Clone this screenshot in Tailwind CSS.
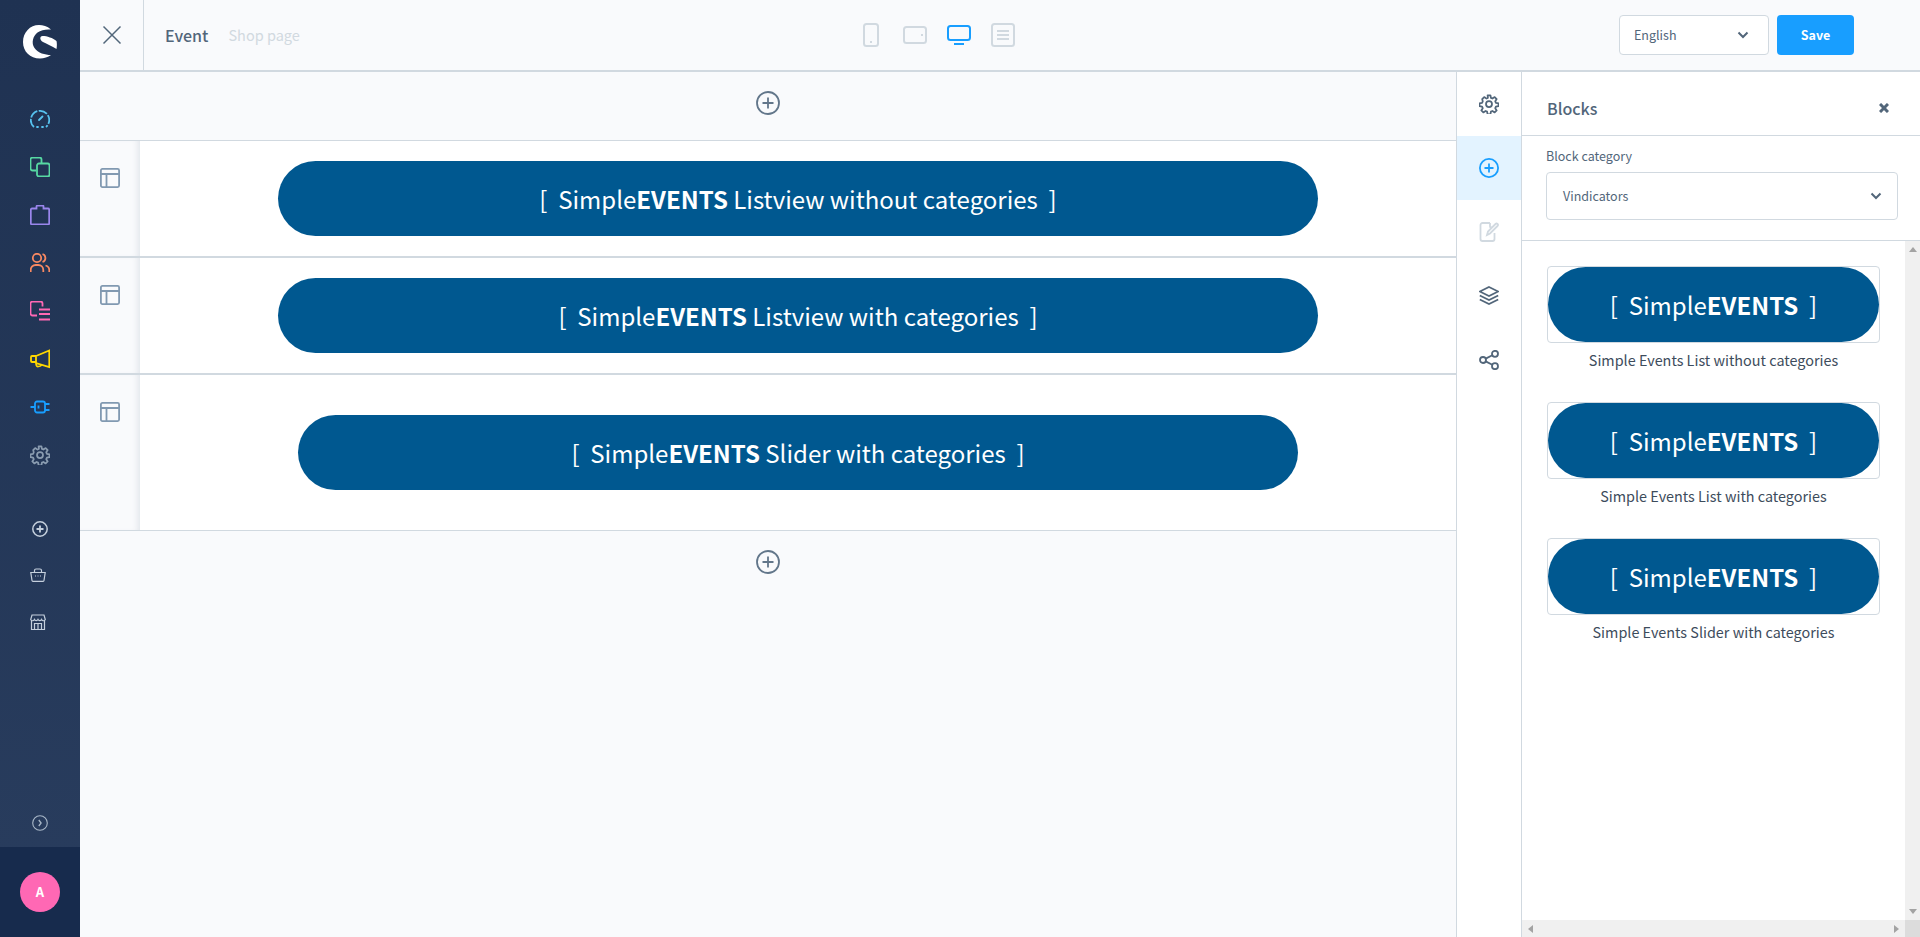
<!DOCTYPE html>
<html lang="en">
<head>
  <meta charset="UTF-8" />
  <title>Event</title>
  <script src="https://cdn.jsdelivr.net/npm/@tailwindcss/browser@4"></script>
</head>
<body class="h-[937px] w-[1920px] overflow-hidden flex bg-[#f9fafc] text-[#52667a] font-['Noto_Sans_CJK_SC','Source_Sans_Pro',sans-serif]">

  <!-- Main navigation -->
  <aside class="w-[80px] h-full shrink-0 flex flex-col bg-gradient-to-b from-[#1f3252] to-[#293d5e]">
    <div class="h-[95px] flex justify-center pt-[25px]">
      <svg width="34" height="34" viewBox="0 0 34 34" fill="#fff"><path d="M28 4.500C24 1 20 0 16 0C7 0 0 7.500 0 17C0 26.500 7 33.500 17 33.500C21 33.500 25 32 28 30C22 30 15 28 11.500 23C8 18 10 11 14.500 7.500C18 5 23 4 28 4.500Z"/><path d="M19.500 11C24 11 30 13 33.500 16C34 18 34 21 33.500 24C29 21 24 19 20 17C16.500 15 16.500 11.500 19.500 11Z"/></svg>
    </div>
    <nav class="flex flex-col items-center">
      <div class="h-[48px] flex items-center justify-center">
        <svg width="20" height="20" viewBox="0 0 20 20" fill="none" stroke="#57c3f0" stroke-width="1.800"><path d="M4 18 A9.200 9.200 0 1 1 16 18" stroke-dasharray="9 1.500"/><path d="M7 18h1M12 18h1M9 11l3.500-3.500" stroke-linecap="round"/></svg>
      </div>
      <div class="h-[48px] flex items-center justify-center">
        <svg width="20" height="20" viewBox="0 0 20 20" fill="none" stroke="#57d9a3" stroke-width="1.800"><path d="M6 13.500H2.500a2 2 0 0 1-2-2v-9a2 2 0 0 1 2-2h7a2 2 0 0 1 2 2V6"/><rect x="7" y="6.500" width="12.500" height="13" rx="2"/></svg>
      </div>
      <div class="h-[48px] flex items-center justify-center">
        <svg width="20" height="20" viewBox="0 0 20 20" fill="none" stroke="#9a86ec" stroke-width="1.800"><path d="M2 3.500h4.500V1.500a1 1 0 0 1 1-1h5a1 1 0 0 1 1 1v2H18a1.200 1.200 0 0 1 1.200 1.200v13.600a1.200 1.200 0 0 1-1.200 1.200H2a1.200 1.200 0 0 1-1.200-1.200V4.700A1.200 1.200 0 0 1 2 3.500z"/></svg>
      </div>
      <div class="h-[48px] flex items-center justify-center">
        <svg width="20" height="20" viewBox="0 0 20 20" fill="none" stroke="#f88962" stroke-width="1.800"><circle cx="7" cy="5" r="4.200"/><path d="M.7 19v-2a5 5 0 0 1 5-5h2.600a5 5 0 0 1 5 5v2M12.500 1a4.200 4.200 0 0 1 0 8M15.500 12.500a5 5 0 0 1 3.800 4.500v2"/></svg>
      </div>
      <div class="h-[48px] flex items-center justify-center">
        <svg width="20" height="20" viewBox="0 0 20 20" fill="none" stroke="#ff68b4" stroke-width="1.800"><path d="M7 14.500H2.500a2 2 0 0 1-2-2v-10a2 2 0 0 1 2-2h8a2 2 0 0 1 2 2v3"/><path d="M9 8.500h11M9 13h11M9 18.500h11"/></svg>
      </div>
      <div class="h-[48px] flex items-center justify-center">
        <svg width="20" height="20" viewBox="0 0 20 20" fill="none" stroke="#ffd700" stroke-width="1.800"><path d="M19.300 1.500v16.500L6 14V7z"/><path d="M6 7H2a1 1 0 0 0-1 1v4a1 1 0 0 0 1 1h4M6 14.500l.5 2a1.500 1.500 0 0 0 1.800 1l2-.5a1.500 1.500 0 0 0 1-1.300"/></svg>
      </div>
      <div class="h-[48px] flex items-center justify-center">
        <svg width="20" height="20" viewBox="0 0 20 20" fill="none" stroke="#189eff" stroke-width="1.800"><rect x="5" y="4.500" width="10" height="11" rx="2"/><path d="M.5 10H5M15 7h4.500M15 13h4.500M8.500 8.500v3"/></svg>
      </div>
      <div class="h-[48px] flex items-center justify-center">
        <svg width="20" height="20" viewBox="0 0 24 24" fill="none" stroke="#8a9cb0" stroke-width="2.100"><circle cx="12" cy="12" r="3.600"/><path d="M10.300 1.500h3.400l.6 3.100 1.800.8 2.700-1.700 2.400 2.400-1.700 2.700.8 1.800 3.100.6v3.400l-3.100.6-.8 1.800 1.700 2.700-2.400 2.400-2.700-1.700-1.800.8-.6 3.100h-3.400l-.6-3.100-1.800-.8-2.700 1.700-2.400-2.400 1.700-2.700-.8-1.800-3.100-.6v-3.400l3.100-.6.8-1.800L3.800 6.100l2.400-2.400 2.700 1.700 1.800-.8z" stroke-linejoin="round"/></svg>
      </div>
    </nav>
    <div class="flex flex-col items-center mt-[27px]">
      <div class="h-[46px] flex items-center justify-center">
        <svg width="16" height="16" viewBox="0 0 16 16" fill="none" stroke="#c5d0dd" stroke-width="1.500"><circle cx="8" cy="8" r="7.200"/><path d="M8 4.500v7M4.500 8h7" stroke-width="1.800"/></svg>
      </div>
      <div class="h-[46px] flex items-center justify-center pr-[4px]">
        <svg width="16" height="14" viewBox="0 0 16 14" fill="none" stroke="#c5d0dd" stroke-width="1.200"><path d="M.8 4.500h14.400l-1.200 8a1 1 0 0 1-1 .9H3a1 1 0 0 1-1-.9zM4.500 4.500v-2a1.500 1.500 0 0 1 1.500-1.500h4a1.500 1.500 0 0 1 1.500 1.500v2M5 8h1M7.500 8h1M10 8h1"/></svg>
      </div>
      <div class="h-[46px] flex items-center justify-center pr-[4px] pt-[2px]">
        <svg width="16" height="16" viewBox="0 0 16 16" fill="none" stroke="#c5d0dd" stroke-width="1.200"><path d="M2 1h12l1.300 4.500a2 2 0 0 1-3.700 0 2 2 0 0 1-3.600 0 2 2 0 0 1-3.600 0 2 2 0 0 1-3.700 0zM1.500 6.500v9h13v-9M4.500 15.500v-6h7v6M8 9.500v6"/></svg>
      </div>
    </div>
    <div class="mt-auto h-[48px] flex items-center justify-center">
      <svg width="16" height="16" viewBox="0 0 16 16" fill="none" stroke="#a9b8c8" stroke-width="1.100"><circle cx="8" cy="8" r="7.300"/><path d="M6.800 5l2.300 3-2.300 3" stroke-width="1.300"/></svg>
    </div>
    <div class="h-[90px] bg-[#172b4d] flex items-center justify-center">
      <div class="w-[40px] h-[40px] rounded-full bg-[#ff68b4] text-white text-[13px] font-bold flex items-center justify-center">A</div>
    </div>
  </aside>

  <div class="flex-1 flex flex-col min-w-0">
    <!-- Top bar -->
    <header class="h-[72px] shrink-0 flex items-stretch border-b-2 border-[#d1d9e0] bg-[#f9fafc]">
      <div class="w-[64px] border-r border-[#d1d9e0] flex items-center justify-center">
        <svg width="20" height="20" viewBox="0 0 20 20" fill="none" stroke="#52667a" stroke-width="1.500"><path d="M1.500 1.500l17 17M18.500 1.500l-17 17"/></svg>
      </div>
      <div class="w-[715px] pl-[21px] flex items-center gap-[20px]">
        <span class="text-[16px] font-medium">Event</span>
        <span class="text-[14.5px] text-[#d1d9e0]">Shop page</span>
      </div>
      <div class="flex items-center gap-[20px] w-[160px]">
        <div class="w-[24px] flex justify-center">
          <svg width="16" height="24" viewBox="0 0 16 24" fill="none" stroke="#d1d9e0" stroke-width="2"><rect x="1" y="1" width="14" height="22" rx="2.500"/><rect x="7" y="18" width="2" height="2" fill="#d1d9e0" stroke="none"/></svg>
        </div>
        <svg width="24" height="18" viewBox="0 0 24 18" fill="none" stroke="#d1d9e0" stroke-width="2"><rect x="1" y="1" width="22" height="16" rx="2.500"/><rect x="18" y="8" width="2" height="2" fill="#d1d9e0" stroke="none"/></svg>
        <svg width="24" height="20" viewBox="0 0 24 20" fill="none" stroke="#189eff" stroke-width="2"><rect x="1" y="1" width="22" height="14" rx="2.500"/><path d="M7 19h10"/></svg>
        <svg width="24" height="24" viewBox="0 0 24 24" fill="none" stroke="#d1d9e0" stroke-width="2"><rect x="1" y="1" width="22" height="22" rx="2.500"/><path d="M6 8h12M6 12h12M6 16h12"/></svg>
      </div>
      <div class="flex-1 flex items-center justify-end pr-[66px] gap-[8px]">
        <div class="w-[150px] h-[40px] bg-white border border-[#d1d9e0] rounded-[4px] flex items-center justify-between pl-[14px] pr-[19px] text-[12.5px]">
          <span>English</span>
          <svg width="12" height="8" viewBox="0 0 12 8" fill="none" stroke="#52667a" stroke-width="2"><path d="M1.500 1.500L6 6l4.500-4.500"/></svg>
        </div>
        <button class="w-[77px] h-[40px] bg-[#189eff] text-white text-[12.5px] font-bold rounded-[4px]">Save</button>
      </div>
    </header>

    <div class="flex-1 flex min-h-0">
      <!-- Canvas -->
      <main class="w-[1376px] shrink-0 flex flex-col">
        <div class="h-[69px] border-b border-[#d1d9e0] flex items-center justify-center pr-[1px] pb-[7px]">
          <svg width="24" height="24" viewBox="0 0 24 24" fill="none" stroke="#62768a" stroke-width="1.800"><circle cx="12" cy="12" r="11"/><path d="M12 6.500v11M6.500 12h11"/></svg>
        </div>

        <section class="h-[117px] flex border-b-2 border-[#d1d9e0]">
          <div class="w-[60px] shrink-0 flex justify-center pt-[27px] bg-[#f9fafc] shadow-[inset_-6px_0_6px_-4px_#e0e4ea]">
            <svg width="20" height="20" viewBox="0 0 20 20" fill="none" stroke="#8199b1" stroke-width="1.800"><rect x=".9" y=".9" width="18.200" height="18.200" rx="1.500"/><path d="M.9 6h18.200M6.500 6v13.100"/></svg>
          </div>
          <div class="flex-1 bg-white flex justify-center pt-[20px]">
            <div class="w-[1040px] h-[75px] rounded-[38px] bg-[#005890] text-white text-[24px] leading-[75px] text-center">[&nbsp; Simple<b>EVENTS</b> Listview without categories &nbsp;]</div>
          </div>
        </section>

        <section class="h-[117px] flex border-b-2 border-[#d1d9e0]">
          <div class="w-[60px] shrink-0 flex justify-center pt-[27px] bg-[#f9fafc] shadow-[inset_-6px_0_6px_-4px_#e0e4ea]">
            <svg width="20" height="20" viewBox="0 0 20 20" fill="none" stroke="#8199b1" stroke-width="1.800"><rect x=".9" y=".9" width="18.200" height="18.200" rx="1.500"/><path d="M.9 6h18.200M6.500 6v13.100"/></svg>
          </div>
          <div class="flex-1 bg-white flex justify-center pt-[20px]">
            <div class="w-[1040px] h-[75px] rounded-[38px] bg-[#005890] text-white text-[24px] leading-[75px] text-center">[&nbsp; Simple<b>EVENTS</b> Listview with categories &nbsp;]</div>
          </div>
        </section>

        <section class="h-[156px] flex border-b border-[#d1d9e0]">
          <div class="w-[60px] shrink-0 flex justify-center pt-[27px] bg-[#f9fafc] shadow-[inset_-6px_0_6px_-4px_#e0e4ea]">
            <svg width="20" height="20" viewBox="0 0 20 20" fill="none" stroke="#8199b1" stroke-width="1.800"><rect x=".9" y=".9" width="18.200" height="18.200" rx="1.500"/><path d="M.9 6h18.200M6.500 6v13.100"/></svg>
          </div>
          <div class="flex-1 bg-white flex justify-center pt-[40px]">
            <div class="w-[1000px] h-[75px] rounded-[38px] bg-[#005890] text-white text-[24px] leading-[75px] text-center">[&nbsp; Simple<b>EVENTS</b> Slider with categories &nbsp;]</div>
          </div>
        </section>

        <div class="h-[61px] flex items-center justify-center pr-[1px]">
          <svg width="24" height="24" viewBox="0 0 24 24" fill="none" stroke="#62768a" stroke-width="1.800"><circle cx="12" cy="12" r="11"/><path d="M12 6.500v11M6.500 12h11"/></svg>
        </div>
      </main>

      <!-- Sidebar tabs -->
      <div class="w-[66px] shrink-0 bg-white border-x border-[#d1d9e0] flex flex-col">
        <div class="h-[64px] flex items-center justify-center">
          <svg width="20" height="20" viewBox="0 0 24 24" fill="none" stroke="#52667a" stroke-width="2.100"><circle cx="12" cy="12" r="3.600"/><path d="M10.300 1.500h3.400l.6 3.100 1.800.8 2.700-1.700 2.400 2.400-1.700 2.700.8 1.800 3.100.6v3.400l-3.100.6-.8 1.800 1.700 2.700-2.400 2.400-2.700-1.700-1.800.8-.6 3.100h-3.400l-.6-3.100-1.800-.8-2.700 1.700-2.400-2.400 1.700-2.700-.8-1.800-3.100-.6v-3.400l3.100-.6.8-1.800L3.800 6.100l2.400-2.400 2.700 1.700 1.800-.8z" stroke-linejoin="round"/></svg>
        </div>
        <div class="h-[64px] bg-[#e3f3ff] flex items-center justify-center">
          <svg width="20" height="20" viewBox="0 0 20 20" fill="none" stroke="#189eff" stroke-width="1.800"><circle cx="10" cy="10" r="9.100"/><path d="M10 5.500v9M5.500 10h9"/></svg>
        </div>
        <div class="h-[64px] flex items-center justify-center">
          <svg width="20" height="20" viewBox="0 0 20 20" fill="none" stroke="#d1d9e0" stroke-width="1.800"><path d="M11 1H3.500A2 2 0 0 0 1.500 3v14a2 2 0 0 0 2 2h10a2 2 0 0 0 2-2v-6"/><path d="M11 1v3.500a1 1 0 0 0 1 1h1"/><path d="M8 13l1-3.500L16.500 2a1.200 1.200 0 0 1 2 2L11 11.500z"/></svg>
        </div>
        <div class="h-[64px] flex items-center justify-center">
          <svg width="20" height="20" viewBox="0 0 20 20" fill="none" stroke="#52667a" stroke-width="1.800"><path d="M10 1l9.200 4.500L10 10 .8 5.500z"/><path d="M.8 9.500L10 14l9.200-4.500M.8 13.500L10 18l9.200-4.500"/></svg>
        </div>
        <div class="h-[64px] flex items-center justify-center">
          <svg width="20" height="20" viewBox="0 0 20 20" fill="none" stroke="#52667a" stroke-width="1.800"><circle cx="16" cy="3.800" r="3"/><circle cx="4" cy="10" r="3"/><circle cx="16" cy="16.200" r="3"/><path d="M6.700 8.600l6.600-3.400M6.700 11.400l6.600 3.400"/></svg>
        </div>
      </div>

      <!-- Blocks panel -->
      <div class="flex-1 min-w-0 bg-white flex flex-col">
        <div class="h-[64px] shrink-0 border-b border-[#d1d9e0] flex items-center justify-between pl-[25px] pr-[31px] pt-[9px]">
          <span class="text-[16px] font-medium">Blocks</span>
          <svg width="10" height="10" viewBox="0 0 10 10" fill="none" stroke="#52667a" stroke-width="3"><path d="M1 1l8 8M9 1l-8 8"/></svg>
        </div>
        <div class="h-[105px] shrink-0 border-b border-[#d1d9e0] pl-[24px] pr-[22px] pt-[10px]">
          <div class="text-[12.5px] leading-[20px] mb-[6px]">Block category</div>
          <div class="h-[48px] border border-[#d1d9e0] rounded-[4px] flex items-center justify-between pl-[16px] pr-[15px] text-[12.5px]">
            <span>Vindicators</span>
            <svg width="12" height="8" viewBox="0 0 12 8" fill="none" stroke="#52667a" stroke-width="2"><path d="M1.500 1.500L6 6l4.500-4.500"/></svg>
          </div>
        </div>
        <div class="flex-1 flex flex-col min-h-0">
          <div class="flex-1 flex min-h-0">
            <div class="flex-1 pl-[25px] pr-[25px] pt-[25px] flex flex-col gap-[25px] text-[#3d4c5c]">
              <div>
                <div class="h-[77px] border border-[#d1d9e0] rounded-[4px] bg-white"><div class="h-[75px] rounded-[38px] bg-[#005890] text-white text-[24px] leading-[75px] text-center">[&nbsp; Simple<b>EVENTS</b> &nbsp;]</div></div>
                <div class="h-[34px] text-[14.4px] leading-[34px] text-center">Simple Events List without categories</div>
              </div>
              <div>
                <div class="h-[77px] border border-[#d1d9e0] rounded-[4px] bg-white"><div class="h-[75px] rounded-[38px] bg-[#005890] text-white text-[24px] leading-[75px] text-center">[&nbsp; Simple<b>EVENTS</b> &nbsp;]</div></div>
                <div class="h-[34px] text-[14.4px] leading-[34px] text-center">Simple Events List with categories</div>
              </div>
              <div>
                <div class="h-[77px] border border-[#d1d9e0] rounded-[4px] bg-white"><div class="h-[75px] rounded-[38px] bg-[#005890] text-white text-[24px] leading-[75px] text-center">[&nbsp; Simple<b>EVENTS</b> &nbsp;]</div></div>
                <div class="h-[34px] text-[14.4px] leading-[34px] text-center">Simple Events Slider with categories</div>
              </div>
            </div>
            <!-- Vertical scrollbar -->
            <div class="w-[15px] shrink-0 bg-[#f0f0f0] flex flex-col items-center justify-between py-[6px]">
              <svg width="8" height="5" viewBox="0 0 8 5" fill="#a3a3a3"><path d="M4 0l4 5H0z"/></svg>
              <svg width="8" height="5" viewBox="0 0 8 5" fill="#a3a3a3"><path d="M0 0h8L4 5z"/></svg>
            </div>
          </div>
          <!-- Horizontal scrollbar -->
          <div class="h-[17px] shrink-0 bg-[#f0f0f0] flex">
            <div class="flex-1 flex items-center justify-between px-[6px]">
              <svg width="5" height="8" viewBox="0 0 5 8" fill="#a3a3a3"><path d="M5 0v8L0 4z"/></svg>
              <svg width="5" height="8" viewBox="0 0 5 8" fill="#a3a3a3"><path d="M0 0l5 4-5 4z"/></svg>
            </div>
            <div class="w-[15px] bg-[#dcdcdc]"></div>
          </div>
        </div>
      </div>
    </div>
  </div>
</body>
</html>
